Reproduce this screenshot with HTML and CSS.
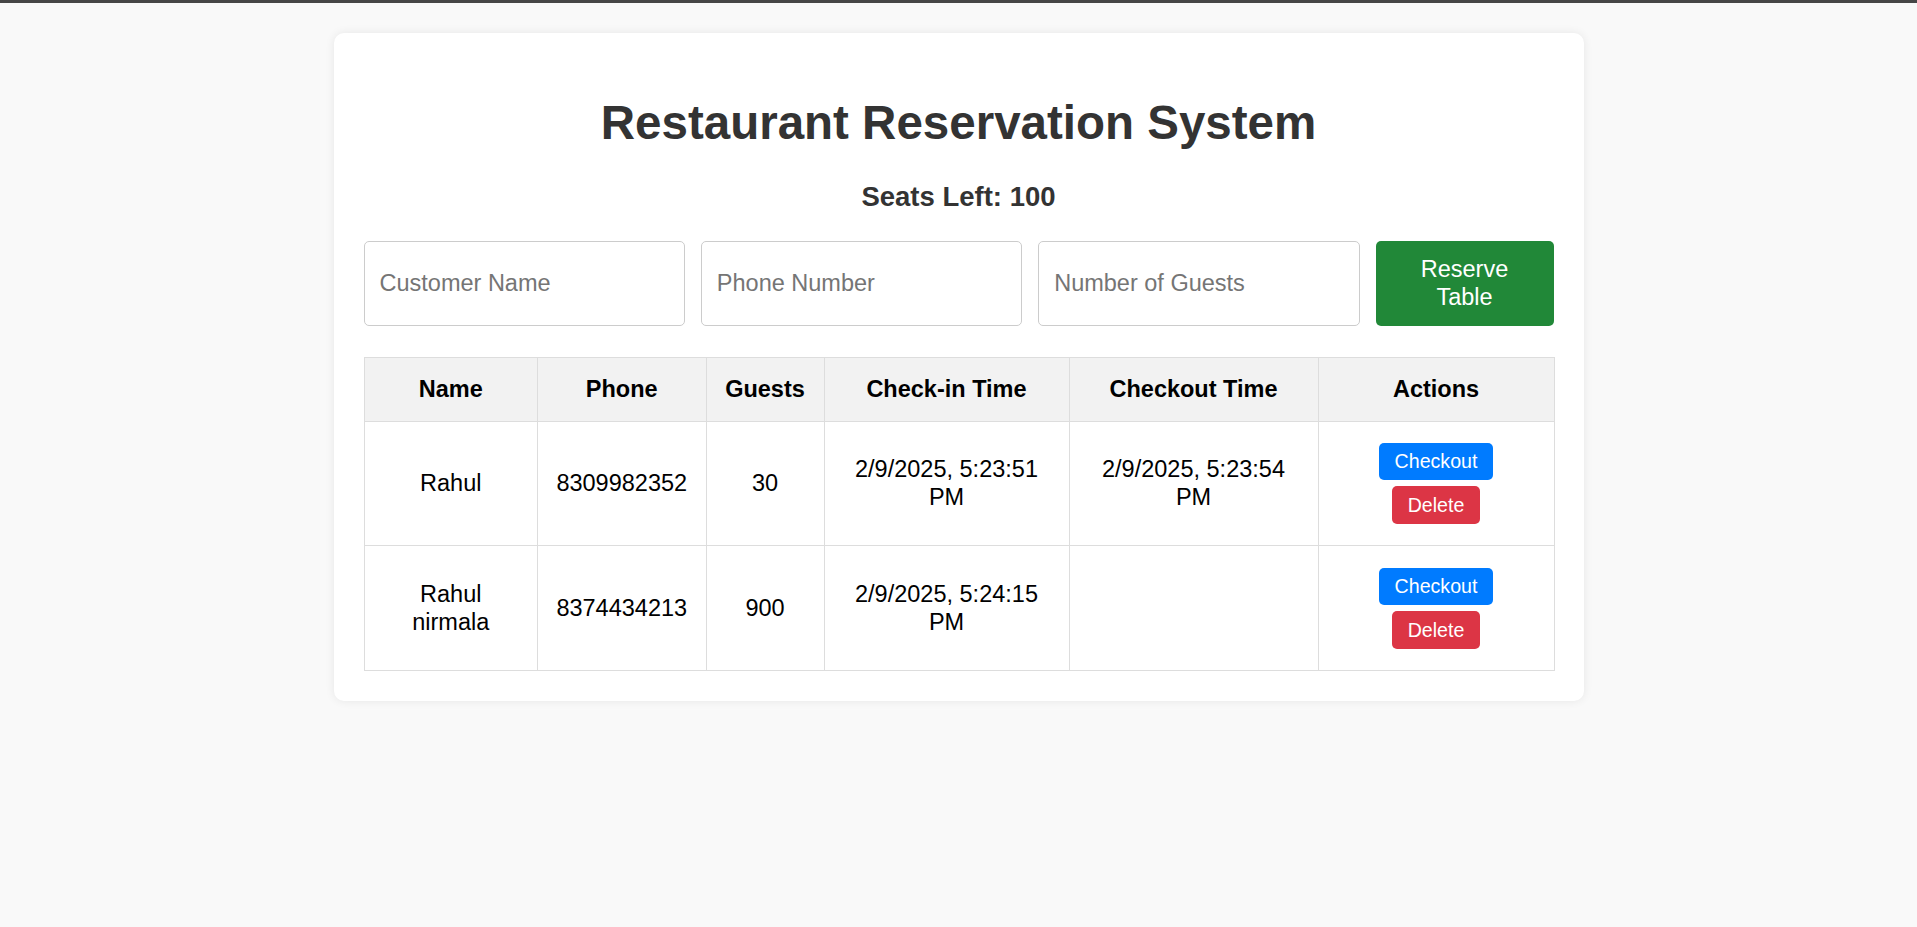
FILE: index.html
```html
<!DOCTYPE html>
<html lang="en">
<head>
<meta charset="utf-8">
<title>Restaurant Reservation System</title>
<link rel="stylesheet" href="styles.css">
</head>
<body>
<div class="topbar"></div>
<main class="page">
  <section class="card">
    <h1 class="title">Restaurant Reservation System</h1>
    <h3 class="seats">Seats Left: 100</h3>
    <form class="form">
      <input class="field" type="text" placeholder="Customer Name">
      <input class="field" type="text" placeholder="Phone Number">
      <input class="field" type="text" placeholder="Number of Guests">
      <button class="reserve" type="button">Reserve Table</button>
    </form>
    <table class="table">
      <colgroup>
        <col class="c-name">
        <col class="c-phone">
        <col class="c-guests">
        <col class="c-in">
        <col class="c-out">
        <col class="c-act">
      </colgroup>
      <thead>
        <tr>
          <th>Name</th>
          <th>Phone</th>
          <th>Guests</th>
          <th>Check-in Time</th>
          <th>Checkout Time</th>
          <th>Actions</th>
        </tr>
      </thead>
      <tbody>
        <tr>
          <td>Rahul</td>
          <td>8309982352</td>
          <td>30</td>
          <td>2/9/2025, 5:23:51 PM</td>
          <td>2/9/2025, 5:23:54 PM</td>
          <td>
            <div class="actions">
              <button class="btn btn-checkout" type="button">Checkout</button>
              <button class="btn btn-delete" type="button">Delete</button>
            </div>
          </td>
        </tr>
        <tr>
          <td>Rahul nirmala</td>
          <td>8374434213</td>
          <td>900</td>
          <td>2/9/2025, 5:24:15 PM</td>
          <td></td>
          <td>
            <div class="actions">
              <button class="btn btn-checkout" type="button">Checkout</button>
              <button class="btn btn-delete" type="button">Delete</button>
            </div>
          </td>
        </tr>
      </tbody>
    </table>
  </section>
</main>
</body>
</html>
```
FILE: styles.css
```css
* { box-sizing: border-box; }

html, body {
  margin: 0;
  padding: 0;
  background: #f9f9f9;
  font-family: "Liberation Sans", Arial, sans-serif;
  font-size: 23.5px;
  color: #000;
}

.topbar {
  height: 3px;
  background: #464646;
}

.page {
  padding: 30px 0 40px;
}

.card {
  width: 1250px;
  margin: 0 auto;
  background: #fff;
  border-radius: 10px;
  padding: 30px;
  box-shadow: 0 0 10px rgba(0, 0, 0, 0.08);
}

.title {
  margin: 31.5px 0 31px;
  font-size: 47.5px;
  font-weight: bold;
  color: #333;
  text-align: center;
}

.seats {
  margin: 27px 0 28px;
  font-size: 27.5px;
  font-weight: bold;
  color: #333;
  text-align: center;
}

.form {
  display: grid;
  grid-template-columns: minmax(0, 1fr) minmax(0, 1fr) minmax(0, 1fr) 178px;
  gap: 16px;
  margin: 0 0 31px;
}

.field {
  width: 100%;
  min-width: 0;
  height: 85px;
  padding: 0 15px;
  border: 1px solid #ccc;
  border-radius: 5px;
  font-family: inherit;
  font-size: 23.5px;
  color: #000;
  background: #fff;
  outline: none;
}

.field::placeholder {
  color: #757575;
}

.reserve {
  width: 100%;
  height: 85px;
  border: none;
  border-radius: 5px;
  background: #218838;
  color: #fff;
  font-family: inherit;
  font-size: 23.5px;
  padding: 0 20px;
  line-height: 28px;
}

.table {
  width: 100%;
  border-collapse: collapse;
  table-layout: fixed;
  text-align: center;
}

.c-name { width: 173.5px; }
.c-phone { width: 168.5px; }
.c-guests { width: 118px; }
.c-in { width: 245px; }
.c-out { width: 249px; }
.c-act { width: 236px; }

.table th,
.table td {
  border: 1px solid #ddd;
  padding: 17.5px 15px;
  vertical-align: middle;
  line-height: 28px;
}

.table th {
  background: #f2f2f2;
  font-weight: bold;
}

.actions {
  display: flex;
  flex-direction: column;
  align-items: center;
  gap: 6px;
  padding: 4px 0;
}

.btn {
  border: none;
  border-radius: 5px;
  color: #fff;
  font-family: inherit;
  font-size: 19.6px;
  line-height: 22.6px;
  padding: 7.4px 15.6px;
}

.btn-checkout { background: #007bff; }
.btn-delete { background: #dc3545; }
```
